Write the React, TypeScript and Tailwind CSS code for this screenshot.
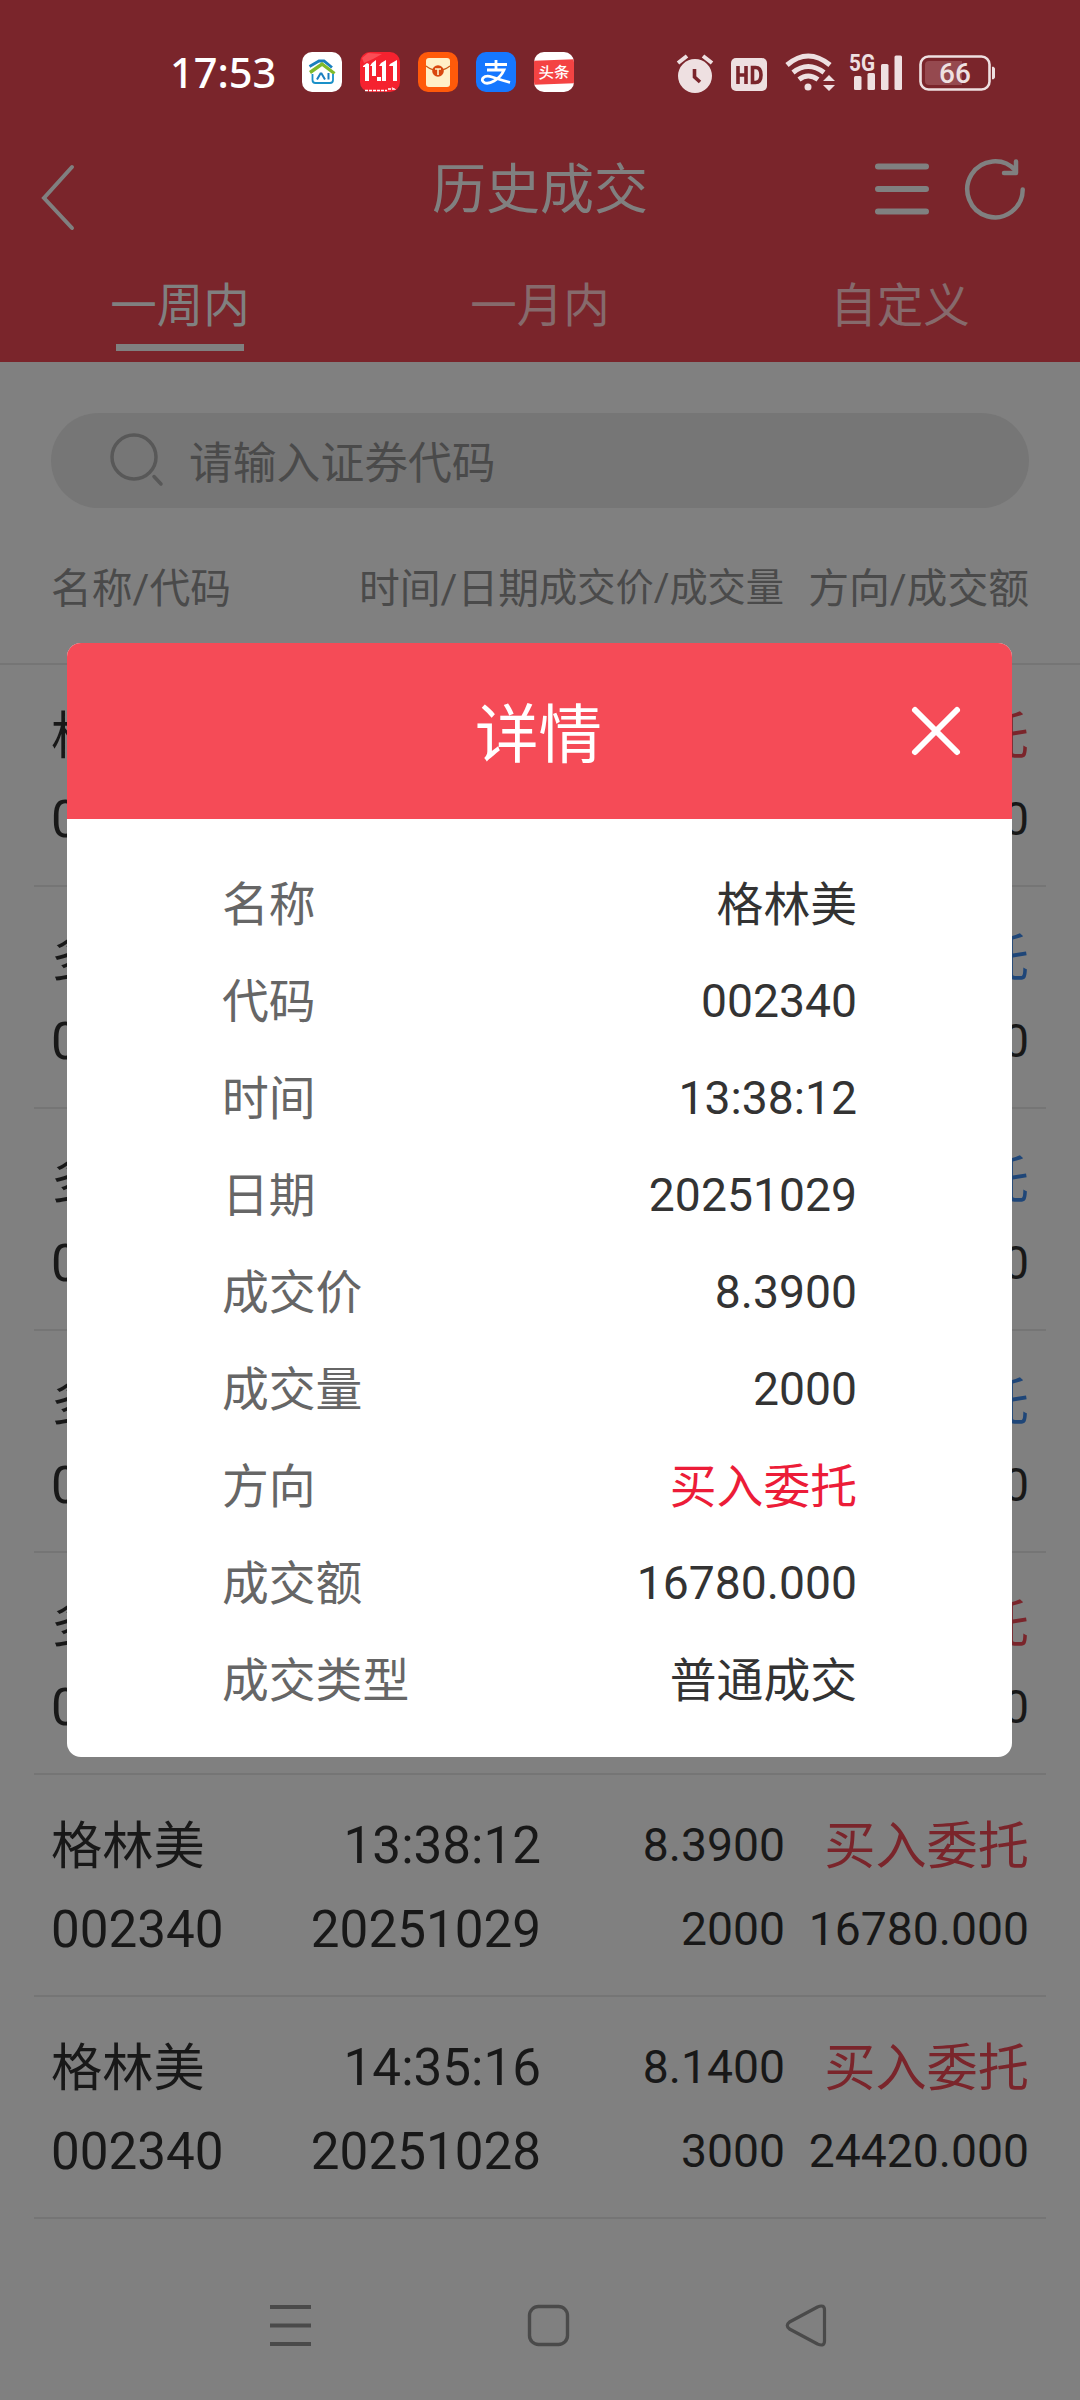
import React from "react";

type Trade = { name: string; code: string; time: string; date: string; price: string; volume: string; side: string; amount: string };

const trades: Trade[] = [
  { name: "格林美", code: "002340", time: "13:38:12", date: "20251029", price: "8.3900", volume: "2000", side: "买入委托", amount: "16780.000" },
  { name: "多氟多", code: "002407", time: "13:38:12", date: "20251029", price: "8.3900", volume: "2000", side: "卖出委托", amount: "16780.000" },
  { name: "多氟多", code: "002407", time: "13:38:12", date: "20251029", price: "8.3900", volume: "2000", side: "卖出委托", amount: "16780.000" },
  { name: "多氟多", code: "002407", time: "13:38:12", date: "20251029", price: "8.3900", volume: "2000", side: "卖出委托", amount: "16780.000" },
  { name: "多氟多", code: "002407", time: "13:38:12", date: "20251029", price: "8.3900", volume: "2000", side: "买入委托", amount: "16780.000" },
  { name: "格林美", code: "002340", time: "13:38:12", date: "20251029", price: "8.3900", volume: "2000", side: "买入委托", amount: "16780.000" },
  { name: "格林美", code: "002340", time: "14:35:16", date: "20251028", price: "8.1400", volume: "3000", side: "买入委托", amount: "24420.000" },
];

const details: [string, string][] = [
  ["名称", "格林美"],
  ["代码", "002340"],
  ["时间", "13:38:12"],
  ["日期", "20251029"],
  ["成交价", "8.3900"],
  ["成交量", "2000"],
  ["方向", "买入委托"],
  ["成交额", "16780.000"],
  ["成交类型", "普通成交"],
];

function AppIcons() {
  return (
    <div className="flex gap-[18px]">
      <svg width="40" height="40" viewBox="0 0 40 40" fill="none">
        <rect width="40" height="40" rx="10" fill="#fff" />
        <path d="M7.500 14.500 17 9h5l8 6.500" stroke="#1a7fc0" strokeWidth="2.800" />
        <path d="M8 20.500 20 12l12.500 9.500" stroke="#7fba2c" strokeWidth="3.400" />
        <path d="M10.500 22v6q0 3 3 3h14.500q3 0 3-3v-6" stroke="#1a90c8" strokeWidth="1.800" />
        <path d="m15 27.500 3.500-6h1l3.500 6M26.500 21v6.500" stroke="#1a7fc0" strokeWidth="2" />
      </svg>
      <svg width="40" height="40" viewBox="0 0 40 40">
        <rect width="40" height="40" rx="10" fill="#f5222f" />
        <path d="M2 6 8 1l14 1-9 5-9 4z" fill="#ff6a70" opacity=".6" />
        <path d="m3 14 4-3 2 1v17H5V15H3zM12 11l4-3v16h-4V14h-2zM17 25h4v4h-4zM21 11l5-3v21h-4V14h-3zM30 12l7-4v21h-4V14h-4z" fill="#fff" />
        <path d="M5 38.500h22M28 37h6l-2-1.500" stroke="#fff" strokeWidth="1.500" strokeDasharray="3 1" fill="none" />
      </svg>
      <svg width="40" height="40" viewBox="0 0 40 40" fill="none">
        <rect width="40" height="40" rx="10" fill="#ff5a0a" />
        <rect x="8" y="6" width="24" height="29" rx="3" fill="#fff0c8" />
        <path d="M8 14q12 9 24 0" stroke="#c75a1a" strokeWidth="1.300" />
        <circle cx="20" cy="19" r="5.800" fill="#d9480f" />
        <path d="M17 17h6M20 17v6" stroke="#fff0c8" strokeWidth="1.600" />
      </svg>
      <svg width="40" height="40" viewBox="0 0 40 40" fill="none">
        <rect width="40" height="40" rx="10" fill="#1677ff" />
        <path d="M9 12.500h22M20 8v10M11 18h17q-3 7-10 11-5 3-9 2-4-2-2-5 3-3 9-1 9 3 18 5.500" stroke="#fff" strokeWidth="2.800" />
      </svg>
      <div className="flex h-10 w-10 flex-col justify-center overflow-hidden rounded-[10px] bg-white">
        <div className="h-[24px] -skew-y-2 bg-[#f44343] text-center text-[15.500px] font-medium leading-[26px] text-white">头条</div>
      </div>
    </div>
  );
}

function StatusBar() {
  return (
    <div className="flex h-[144px] items-start pt-[52px]">
      <div className="ml-[170px] w-[132px] font-['Noto_Sans'] text-[41.5px] font-medium leading-[41px] text-white">17:53</div>
      <AppIcons />
      <svg className="ml-[101px]" width="325" height="44" viewBox="675 52 325 44" fill="none">
        <circle cx="695" cy="76" r="17" fill="#eee0e1" />
        <path d="m678 63 9-7M703 56l9 7" stroke="#eee0e1" strokeWidth="4" />
        <path d="M694.500 69v8l5.500 5" stroke="#7a252b" strokeWidth="3.600" />
        <rect x="731" y="58" width="36" height="33" rx="5" fill="#eee0e1" />
        <path d="M738 66v18M746 66v18M738 75h8M752.500 67.500v15h3q5.500 0 5.500-7.500t-5.500-7.500z" stroke="#7a252b" strokeWidth="3.600" />
        <path d="M787 65q21-18 43 0M793 72.500q15-12 31 0M799 79.500q9-7 19 0" stroke="#eee0e1" strokeWidth="5" />
        <circle cx="808" cy="87" r="3.500" fill="#eee0e1" />
        <path d="m823 81 6-6 6 6zM823 85h12l-6 6z" fill="#eee0e1" />
        <rect x="854" y="76" width="7.500" height="14" rx="1.500" fill="#eee0e1" />
        <rect x="867.500" y="73" width="7.500" height="17" rx="1.500" fill="#eee0e1" />
        <rect x="881" y="64" width="7.500" height="26" rx="1.500" fill="#eee0e1" />
        <rect x="894.500" y="55.500" width="7.500" height="34.500" rx="1.500" fill="#eee0e1" />
        <text x="849" y="70.500" fontSize="23" fontWeight="700" fill="#eee0e1" textLength="26" lengthAdjust="spacingAndGlyphs">5G</text>
        <rect x="920.500" y="56.500" width="69" height="33" rx="8" stroke="#eee0e1" strokeWidth="2.600" />
        <path d="M929 61h33v24h-33q-4 0-4-4V65q0-4 4-4z" fill="#95494f" />
        <path d="M992.500 67q2 0 2 2v8q0 2-2 2z" fill="#eee0e1" stroke="#eee0e1" />
        <text x="955" y="82.500" fontSize="28" fontWeight="500" fill="#eee0e1" textAnchor="middle">66</text>
      </svg>
    </div>
  );
}

function Header() {
  return (
    <div className="h-[362px] bg-[#7a252b]">
      <StatusBar />
      <div className="grid h-[90px] grid-cols-[1fr_auto_1fr] items-center pr-[52px] pl-[52px]">
        <svg className="mt-[18px] -ml-[14px]" width="60" height="70" viewBox="38 163 60 70" fill="none">
          <path d="m72 167-28 31 28 30" stroke="#808080" strokeWidth="4" strokeLinecap="round" />
        </svg>
        <div className="pt-[4px] text-[54px] leading-[86px] text-[#808080]">历史成交</div>
        <svg className="justify-self-end" width="156" height="68" viewBox="872 155 156 68" fill="none" stroke="#808080" strokeLinecap="round" strokeLinejoin="round">
          <path d="M878 166.500h48M878 189h48M878 211.500h48" strokeWidth="6" />
          <path d="M1022.700 189.500a27.700 28 0 1 1-7.200-19" strokeWidth="4.500" />
          <path d="M1016 161.500v11.500h-12" strokeWidth="4.500" />
        </svg>
      </div>
      <div className="grid grid-cols-3 text-center text-[46.5px] leading-[70px] text-[#866a6c]">
        <div className="flex flex-col items-center pt-[37px] text-[#808080]">
          <span>一周内</span>
          <div className="mt-[3px] h-[7px] w-32 bg-[#808080]" />
        </div>
        <div className="pt-[37px]">一月内</div>
        <div className="pt-[37px]">自定义</div>
      </div>
    </div>
  );
}

function TradeRow({ t }: { t: Trade }) {
  const side = t.side === "买入委托" ? "text-[#7a252b]" : "text-[#1f4678]";
  return (
    <div className="mx-[34px] grid h-[222px] grid-cols-[190px_300px_244px_244px] content-start border-b-2 border-[#757575] pt-[40px] pl-[17px] text-right text-[51.2px] leading-[60px] text-[#181818]">
      <span className="pt-[2px] text-left whitespace-nowrap">{t.name}</span>
      <span className="pt-[1px]">{t.time}</span>
      <span className="text-[46.3px]">{t.price}</span>
      <span className={`pt-[2px] whitespace-nowrap ${side}`}>{t.side}</span>
      <span className="mt-[23px] text-left">{t.code}</span>
      <span className="mt-[23px]">{t.date}</span>
      <span className="mt-[22px] text-[46.3px]">{t.volume}</span>
      <span className="mt-[22px] text-[46.3px]">{t.amount}</span>
    </div>
  );
}

function DetailDialog() {
  return (
    <div className="absolute top-[643px] left-[67px] h-[1114px] w-[945px] overflow-hidden rounded-[14px] bg-white">
      <div className="grid h-[176px] grid-cols-[1fr_auto_1fr] items-center bg-[#f54b57] pr-[48px] pl-[48px] text-[63.5px] text-white">
        <span />
        <span className="-ml-[2px] pt-[10px] leading-[166px]">详情</span>
        <svg className="justify-self-end" width="56" height="56" viewBox="0 0 56 56" fill="none" stroke="#fff" strokeWidth="6" strokeLinecap="round">
          <path d="m7 7 42 42M49 7 7 49" />
        </svg>
      </div>
      <div className="pt-[37px] pr-[155px] pl-[155px]">
        {details.map(([label, value]) => (
          <div key={label} className="flex h-[97px] items-center justify-between leading-[97px]">
            <span className="pt-[2px] text-[46.800px] text-[#666]">{label}</span>
            {/^[0-9]/.test(value) ? (
              <span className="text-[46.300px] text-[#333]">{value}</span>
            ) : (
              <span className={value === "买入委托" ? "pt-[2px] text-[46.800px] text-[#ec1c38]" : "pt-[2px] text-[46.800px] text-[#333]"}>{value}</span>
            )}
          </div>
        ))}
      </div>
    </div>
  );
}

export default function App() {
  return (
    <div className="relative h-[2400px] w-[1080px] overflow-hidden bg-[#808080] font-['Roboto','Noto_Sans_CJK_SC',sans-serif]">
      <Header />
      <div className="mx-[51px] mt-[51px] flex h-[95px] items-center rounded-full bg-[#767676] pl-[57px] text-[43.800px] text-[#4a4a4a]">
        <svg width="58" height="60" viewBox="107 430 58 60" fill="none" stroke="#585858" strokeWidth="3.500" strokeLinecap="round">
          <circle cx="133" cy="456" r="22" />
          <path d="m153 475.500 7 7.500" />
        </svg>
        <span className="ml-[23px] pt-[7px] leading-[88px]">请输入证券代码</span>
      </div>
      <div className="grid h-[157px] grid-cols-[224px_265px_245px_346px] border-b-2 border-[#757575] text-[40.800px] leading-[163px] whitespace-nowrap text-[#4a4a4a]">
        <span className="pl-[51px]">名称/代码</span>
        <span className="-mr-[50px] flex justify-end">时间/日期</span>
        <span className="-mr-[50px] flex justify-end text-[38.200px] leading-[160px]">成交价/成交量</span>
        <span className="pr-[51px] text-right">方向/成交额</span>
      </div>
      {trades.map((t, i) => (
        <TradeRow key={i} t={t} />
      ))}
      <div className="flex h-[181px] items-center justify-center">
        <svg className="mt-[32px] ml-[18px]" width="570" height="50" viewBox="264 2301 570 50" fill="none" stroke="#4a4a4a" strokeLinejoin="round">
          <path d="M270 2307h41M270 2325.500h41M270 2344h41" strokeWidth="3.800" />
          <rect x="529.500" y="2306.500" width="38" height="38" rx="9" strokeWidth="3.400" />
          <path d="M789.500 2322q-4.500 3.500 0 7l28 15q7 3 7-3v-31q0-6-7-3z" strokeWidth="3.200" />
        </svg>
      </div>
      <DetailDialog />
    </div>
  );
}
